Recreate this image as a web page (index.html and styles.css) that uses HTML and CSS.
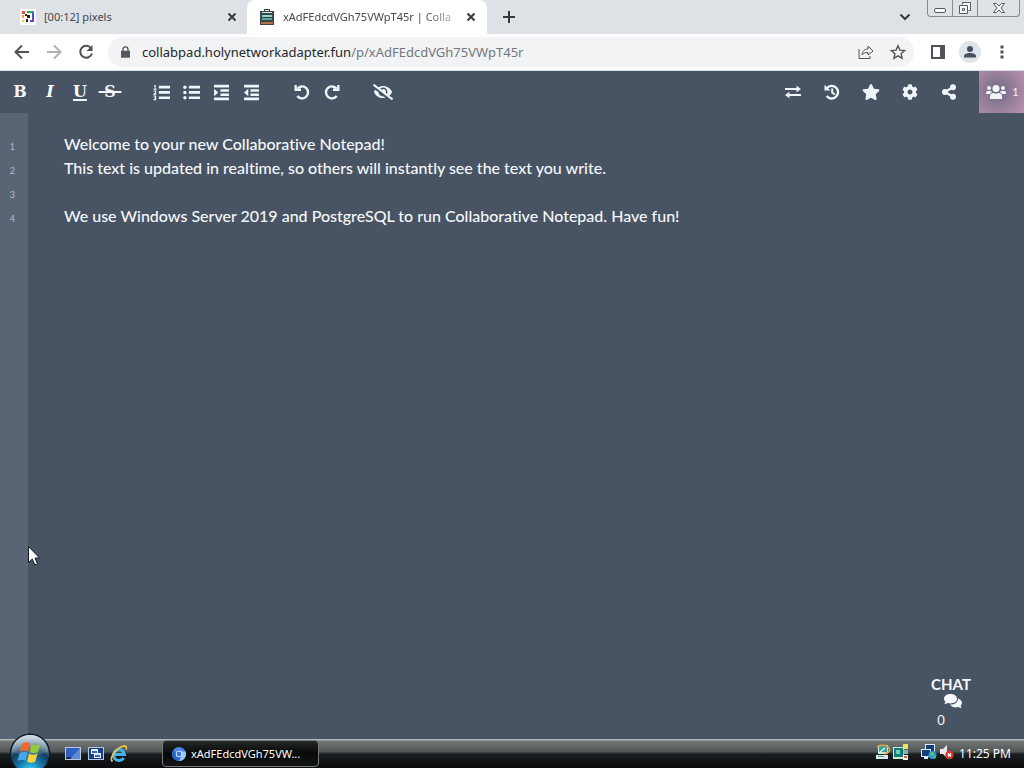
FILE: index.html
```
<!DOCTYPE html>
<html lang="en">
<head>
<meta charset="utf-8">
<title>xAdFEdcdVGh75VWpT45r | Collaborative Notepad</title>
<link rel="stylesheet" href="styles.css">
</head>
<body>
<header class="tabstrip">
  <div class="tab">
    <svg class="favicon" viewBox="0 0 16 16" width="16" height="16"><path fill="#fff" d="M0 0h16v16H0z"/><path fill="#e94b3c" d="M2 2h3v3H2z"/><path fill="#f5a623" d="M2 6h2v3H2z"/><path fill="#222" d="M5 5h2v2H5zM6 10h2v3H6zM7 6h3v3H7z"/><path fill="#f5d423" d="M2 11h2v2H2z"/><path fill="#2f9e55" d="M7 2h4v2H7z"/><path fill="#3a8bd0" d="M11 2h3v2h-3z"/><path fill="#3a53d0" d="M12 4h2v5h-2z"/><path fill="#7a3bc4" d="M12 9h2v4h-4v-2h2z"/></svg>
    <a class="tab-title" href="#pixels">[00:12] pixels</a>
    <button class="tab-close" aria-label="Close pixels tab"><svg viewBox="0 0 10 10" width="10" height="10"><path d="M1.500 1.500l7 7m0-7l-7 7"/></svg></button>
  </div>
  <div class="tab tab-active">
    <svg class="favicon" viewBox="0 0 16 16" width="16" height="16"><path fill="#37474c" d="M1 2h4V0h6v2h4v14H1z"/><path fill="#d8e4e4" d="M6 1h4v1H6zM3 3h10v1H3z"/><path fill="#8fd4c6" d="M3 6h10v2H3z"/><path fill="#5aa497" d="M3 9h10v2H3z"/><path fill="#b5714f" d="M2 13h12v2H2z"/></svg>
    <a class="tab-title" href="#pad">xAdFEdcdVGh75VWpT45r | Colla</a>
    <button class="tab-close" aria-label="Close notepad tab"><svg viewBox="0 0 10 10" width="10" height="10"><path d="M1.500 1.500l7 7m0-7l-7 7"/></svg></button>
  </div>
  <button class="new-tab" aria-label="New tab"><svg viewBox="0 0 14 14" width="14" height="14"><path d="M7 1v12M1 7h12"/></svg></button>
  <button class="tab-search" aria-label="Search tabs"><svg viewBox="0 0 12 8" width="12" height="8"><path d="M1.500 1.500L6 6l4.500-4.500"/></svg></button>
  <div class="window-controls">
    <button aria-label="Minimize"><svg viewBox="0 0 14 14" width="14" height="14"><rect x="1.500" y="7.500" width="11" height="4" rx="1.500"/></svg></button>
    <button aria-label="Restore"><svg viewBox="0 0 14 14" width="14" height="14"><path d="M4.500 3.500v-2h8v8h-2M1.500 4.500h8v8h-8zM4.500 7.500h2v2h-2z"/></svg></button>
    <button class="wide" aria-label="Close window"><svg viewBox="0 0 14 14" width="14" height="14"><path d="M1.500 2.500h3L7 5l2.500-2.500h3L9 7l3.500 4.500h-3L7 9l-2.500 2.500h-3L5 7z"/></svg></button>
  </div>
</header>

<nav class="navbar">
  <button class="nav-btn" aria-label="Back"><svg viewBox="0 0 16 16" width="16" height="16"><path d="M15 8H2m6-6.500L1.500 8 8 14.500"/></svg></button>
  <button class="nav-btn muted" aria-label="Forward"><svg viewBox="0 0 16 16" width="16" height="16"><path d="M1 8h13M8 1.500L14.500 8 8 14.500"/></svg></button>
  <button class="nav-btn" aria-label="Reload"><svg viewBox="0 0 16 16" width="16" height="16"><path d="M13 4a6 6 0 1 0 1 5.500"/><path class="solid" d="M14.500 1v6h-6z"/></svg></button>
  <div class="omnibox">
    <svg class="lock" viewBox="0 0 10 13" width="9" height="12"><path fill="#55585c" d="M0 5h1.500V3.500a3.500 3.500 0 0 1 7 0V5H10v8H0zM3 5h4V3.500a2 2 0 0 0-4 0z"/></svg>
    <div class="url" role="textbox" contenteditable="true" spellcheck="false" aria-label="Address">collabpad.holynetworkadapter.fun<span>/p/xAdFEdcdVGh75VWpT45r</span></div>
    <button aria-label="Share page"><svg viewBox="0 0 16 16" width="16" height="16"><path class="thin" d="M1 5v9.500h11V12M4 11c.5-4 2.500-6 6-6V2l5 5-5 4V8.500c-3 0-4.500.5-6 2.500z"/></svg></button>
    <button aria-label="Bookmark"><svg viewBox="0 0 16 16" width="16" height="16"><path class="star" d="M8 1.800l1.900 4.300 4.700.5-3.500 3.100 1 4.600L8 11.900l-4.100 2.400 1-4.600-3.500-3.100 4.700-.5z"/></svg></button>
  </div>
  <button class="nav-btn side" aria-label="Side panel"><svg viewBox="0 0 16 16" width="16" height="16"><path class="solid" d="M1 1h14v14H1zM3 3v10h7V3z" fill-rule="evenodd"/></svg></button>
  <button class="nav-btn" aria-label="Profile"><svg viewBox="0 0 22 22" width="22" height="22"><circle cx="11" cy="11" r="11" fill="#dfe4e9" stroke="none"/><circle cx="11" cy="8" r="3" fill="#46515f" stroke="none"/><path fill="#46515f" stroke="none" d="M5 16.500v-1.500c0-4 12-4 12 0v1.500z"/></svg></button>
  <button class="nav-btn" aria-label="Menu"><svg viewBox="0 0 4 16" width="4" height="16"><path class="solid" d="M.5 1.500h3v3h-3zM.5 6.500h3v3h-3zM.5 11.500h3v3h-3z"/></svg></button>
</nav>

<main class="pad">
  <div class="toolbar">
    <div class="group">
      <button aria-label="Bold" class="letter">B</button>
      <button aria-label="Italic" class="letter italic">I</button>
      <button aria-label="Underline" class="letter underline">U</button>
      <button aria-label="Strikethrough" class="letter strike"><s>&nbsp;S&nbsp;</s></button>
    </div>
    <div class="group">
      <button aria-label="Ordered list"><svg viewBox="0 0 16 16" width="17" height="17"><path d="M5.500 1.700H16v2.500H5.500zM5.500 6.700H16v2.500H5.500zM5.500 11.700H16v2.500H5.500z"/><path class="line" d="M1 1.500h1V5M.5 5h3M.5 6.500h2v1.700L.8 9.700h2.400M.5 11.300h2v3.400h-2M1 13h1.500"/></svg></button>
      <button aria-label="Unordered list"><svg viewBox="0 0 16 16" width="17" height="17"><path d="M5.500 1.700H16v2.500H5.500zM5.500 6.700H16v2.500H5.500zM5.500 11.700H16v2.500H5.500z"/><circle cx="1.800" cy="3" r="1.600"/><circle cx="1.800" cy="8" r="1.600"/><circle cx="1.800" cy="13" r="1.600"/></svg></button>
      <button aria-label="Indent"><svg viewBox="0 0 16 16" width="17" height="17"><path d="M1 .8h14v2.400H1zM7 4.900h8v2.300H7zM7 8.900h8v2.300H7zM1 12.800h14v2.400H1zM1 4.500L5 8l-4 3.500z"/></svg></button>
      <button aria-label="Outdent"><svg viewBox="0 0 16 16" width="17" height="17"><path d="M1 .8h14v2.400H1zM7 4.900h8v2.300H7zM7 8.900h8v2.300H7zM1 12.800h14v2.400H1zM5 4.500v7L1 8z"/></svg></button>
    </div>
    <div class="group">
      <button aria-label="Undo"><svg viewBox="0 0 16 16" width="16" height="16"><path class="arc" d="M3.500 4.500a6 6 0 1 1-.2 7.600"/><path d="M.5 1h2.300v3.500h4.200V7H.5z"/></svg></button>
      <button aria-label="Redo"><svg viewBox="0 0 16 16" width="16" height="16"><path class="arc" d="M12.500 4.500a6 6 0 1 0 .2 7.600"/><path d="M15.500 1h-2.300v3.500H9V7h6.500z"/></svg></button>
    </div>
    <div class="group">
      <button aria-label="Clear authorship colors"><svg viewBox="0 0 640 512" width="20" height="16"><path d="M320 400c-75.900 0-137.300-58.700-142.900-133.100L72.200 185.800c-13.800 17.300-26.500 35.600-36.700 55.600a32.400 32.400 0 0 0 0 29.200C89.700 376.400 197.100 448 320 448c26.900 0 52.900-4 77.900-10.500L346 397.400a144 144 0 0 1-26 2.600zm313.800 58.100l-110.500-85.400a331.300 331.300 0 0 0 81.200-102.100 32.400 32.400 0 0 0 0-29.200C550.300 135.600 442.900 64 320 64a308.200 308.200 0 0 0-147.300 37.700L45.500 3.400A16 16 0 0 0 23 6.200L3.400 31.500A16 16 0 0 0 6.200 53.900l588.400 454.700a16 16 0 0 0 22.400-2.800l19.600-25.300a16 16 0 0 0-2.800-22.400zM450.200 314.500l-39.300-30.400A94.800 94.800 0 0 0 416 256a94.800 94.800 0 0 0-121.300-92.200A47.700 47.700 0 0 1 304 192a46.600 46.600 0 0 1-1.500 10l-73.600-56.900A142.300 142.300 0 0 1 320 112a143.900 143.900 0 0 1 144 144c0 21.600-5.300 41.800-13.800 58.500z"/></svg></button>
    </div>
    <div class="group group-right">
      <button aria-label="Import and export"><svg viewBox="0 0 16 16" width="16" height="16"><path d="M0 4h11.500V1.800L16 5l-4.500 3.200V6H0zM16 10H4.500V7.800L0 11l4.500 3.200V12H16z"/></svg></button>
      <button aria-label="History"><svg viewBox="0 0 16 16" width="16" height="16"><path class="arc" d="M3 4a6.300 6.300 0 1 1-.3 8"/><path d="M.5.8L6.500 6.500H.5z"/><path class="hand" d="M8.200 4.500v4l2.500 2"/></svg></button>
      <button aria-label="Save revision"><svg viewBox="0 0 576 512" width="18" height="16"><path d="M259.300 17.800L194 150.200 47.900 171.500c-26.200 3.800-36.700 36.100-17.700 54.600l105.700 103-25 145.500c-4.500 26.300 23.200 46 46.400 33.700L288 439.600l130.700 68.700c23.200 12.200 50.900-7.400 46.400-33.700l-25-145.500 105.700-103c19-18.500 8.500-50.800-17.700-54.600L382 150.200 316.700 17.800c-11.700-23.600-45.600-23.900-57.400 0z"/></svg></button>
      <button aria-label="Settings"><svg viewBox="0 0 512 512" width="16" height="16"><path d="M487.400 315.700l-42.600-24.600c4.300-23.200 4.300-47 0-70.200l42.600-24.600c4.900-2.800 7.100-8.600 5.500-14-11.100-35.600-30-67.800-54.700-94.600-3.800-4.100-10-5.100-14.800-2.300L380.800 110c-17.900-15.400-38.500-27.300-60.800-35.100V25.800c0-5.600-3.900-10.500-9.400-11.700-36.700-8.200-74.300-7.800-109.200 0-5.500 1.200-9.400 6.100-9.400 11.700V75c-22.200 7.900-42.800 19.800-60.800 35.100L88.700 85.500c-4.900-2.800-11-1.900-14.800 2.300-24.700 26.700-43.600 58.900-54.700 94.600-1.700 5.400.6 11.200 5.500 14L67.300 221c-4.300 23.200-4.300 47 0 70.200l-42.600 24.600c-4.900 2.800-7.100 8.600-5.500 14 11.100 35.600 30 67.800 54.700 94.600 3.800 4.100 10 5.100 14.800 2.300l42.600-24.600c17.900 15.400 38.500 27.300 60.800 35.100v49.200c0 5.600 3.900 10.500 9.400 11.700 36.700 8.200 74.300 7.800 109.200 0 5.500-1.200 9.400-6.100 9.400-11.700v-49.200c22.200-7.900 42.800-19.800 60.800-35.100l42.600 24.600c4.900 2.800 11 1.900 14.800-2.300 24.700-26.700 43.600-58.900 54.700-94.600 1.500-5.500-.7-11.300-5.600-14.100zM256 336c-44.100 0-80-35.900-80-80s35.900-80 80-80 80 35.900 80 80-35.900 80-80 80z"/></svg></button>
      <button aria-label="Share pad"><svg viewBox="0 0 16 16" width="16" height="16"><circle cx="12" cy="3.200" r="3"/><circle cx="4" cy="8" r="3"/><circle cx="12" cy="12.800" r="3"/><path class="arc" d="M12 3.200L4 8l8 4.800"/></svg></button>
    </div>
    <button class="users" aria-label="Connected users"><svg viewBox="0 0 20 16" width="20" height="16"><circle cx="3" cy="4" r="2"/><circle cx="17" cy="4" r="2"/><circle cx="10" cy="4.500" r="3.500"/><path d="M0 10V9c0-1.500 1-2 2-2h2c1 0 1.500.4 2 1-1 .6-1.500 1-1.800 2zM20 10V9c0-1.500-1-2-2-2h-2c-1 0-1.500.4-2 1 1 .6 1.500 1 1.800 2zM4 15v-2.500C4 10 5.500 9 7.500 9c1.500.7 3.500.7 5 0 2 0 3.500 1 3.500 3.500V15z"/></svg><span>1</span></button>
  </div>

  <div class="editor">
    <ol class="gutter"><li>1</li><li>2</li><li>3</li><li>4</li></ol>
    <textarea class="text" aria-label="Pad text" spellcheck="false">Welcome to your new Collaborative Notepad!
This text is updated in realtime, so others will instantly see the text you write.

We use Windows Server 2019 and PostgreSQL to run Collaborative Notepad. Have fun!</textarea>
    <button class="chat"><span class="chat-label">CHAT</span>
      <svg viewBox="0 0 18 14" width="18" height="14"><path d="M6.500 0C10 0 13 2 13 4.800s-3 4.700-6.500 4.700c-1 0-2-.2-2.800-.5C2.700 9.700 1.500 10 .2 10c.6-.7 1-1.500 1.200-2.300C.5 6.900 0 5.900 0 4.800 0 2 3 0 6.500 0z"/><path d="M14 4.400c2.300.7 4 2.300 4 4.400 0 1.100-.5 2.100-1.400 2.900.2.800.6 1.600 1.200 2.300-1.300 0-2.500-.4-3.500-1-3.200 1-6.800 0-8.300-2.500 4.500.2 8-2.300 8-6.100z"/></svg>
      <span class="chat-count">0</span></button>
  </div>
  <svg class="cursor" viewBox="0 0 12 20" width="12" height="20"><path d="M.5.500v16L4.300 13l2.600 6 2.600-1.100L7 12h4.500z"/></svg>
</main>

<footer class="taskbar">
  <button class="start" aria-label="Start"><svg viewBox="0 0 42 42" width="42" height="42">
    <defs><radialGradient id="orb" cx=".5" cy=".95" r=".9"><stop offset="0" stop-color="#3fe0ff"/><stop offset=".35" stop-color="#1878ae"/><stop offset=".65" stop-color="#123c5c"/><stop offset="1" stop-color="#a9bac8"/></radialGradient><linearGradient id="gloss" x2="0" y2="1"><stop offset="0" stop-color="#dce5ec" stop-opacity=".85"/><stop offset="1" stop-color="#8ca6b8" stop-opacity=".25"/></linearGradient></defs>
    <circle cx="21" cy="21" r="20.500" fill="#101a22"/><circle cx="21" cy="21" r="19" fill="url(#orb)"/><path fill="url(#gloss)" d="M3 19a18 17 0 0 1 36 0q-18 7-36 0z"/>
    <path fill="#ee6a2c" d="M13 11q4-3 8-.5l-2 8q-4-2-8 .5z"/><path fill="#94c83d" d="M22.500 11q4 2.500 9 0l-2.500 8q-4 2.500-8.500 0z"/><path fill="#45a8e8" d="M10.600 20.500q4-2.500 8-.5l-2 8q-4-2.500-8 0z"/><path fill="#fbd13b" d="M20 20.500q4 2.500 8.600 0l-2.300 8q-4 2.500-8.300 0z"/></svg></button>
  <button class="quick" aria-label="Show desktop"><svg viewBox="0 0 16 14" width="16" height="14"><path fill="#b9c6dc" d="M0 0h16v13H0z"/><path fill="#315fc1" d="M1 1h14v11H1z"/><path fill="#7da7ea" d="M15 1v11L5 12z" opacity=".6"/><path fill="#1b2b4c" d="M1 10h5v2H1z"/></svg></button>
  <button class="quick" aria-label="Switch windows"><svg viewBox="0 0 16 14" width="16" height="14"><path fill="#b9c6dc" d="M0 0h16v13H0z"/><path fill="#173f87" d="M1 1h14v11H1z"/><path fill="#e6effb" d="M3 2h7v5H3zM6 6h7v5H6z"/><path fill="#356ac0" d="M4 4h5v2H4zM7 8h5v2H7z"/></svg></button>
  <button class="quick" aria-label="Internet Explorer"><svg viewBox="0 0 18 18" width="18" height="18"><path fill="none" stroke="#42b3f0" stroke-width="3" d="M4 9.500h10.500A5.500 5.500 0 1 0 13.700 13"/><path fill="none" stroke="#f5c83b" stroke-width="1.600" d="M2.500 16.500C-1 14 5 4 12 1.500c4-1.500 5 0 4 3"/></svg></button>
  <button class="task"><svg viewBox="0 0 14 14" width="14" height="14"><circle cx="7" cy="7" r="7" fill="#4b86e6"/><path fill="#9fc5ff" d="M7 14a7 7 0 0 0 6.500-9.500H7z"/><path fill="#2866cc" d="M1 3.500A7 7 0 0 0 7 14l2.500-5z"/><circle cx="7" cy="7" r="3.200" fill="#e8f1ff"/><circle cx="7" cy="7" r="2.400" fill="#3476dc"/></svg><span>xAdFEdcdVGh75VW...</span></button>
  <div class="tray">
    <svg viewBox="0 0 16 16" width="16" height="16"><path fill="#c9e8e4" d="M3 1h10v9H3z"/><path fill="#3a9e9a" d="M4 2h8v6H4z"/><path fill="#dcebea" d="M1 11h12v4H1z"/><path fill="#4a9c92" d="M3 12h6v1H3z"/><path fill="none" stroke="#d9a648" stroke-width="1.500" d="M2 3c3-3 10-2 12 1s-2 6-5 6"/><path fill="none" stroke="#e8f6f4" stroke-width="1.200" d="M5 8l5-4"/></svg>
    <svg viewBox="0 0 16 16" width="16" height="16"><path fill="#c7ecdc" d="M0 3h11v12H0z"/><path fill="#137c74" d="M1 4h9v9H1z"/><path fill="#67d5bb" d="M3 6h4v4H3z"/><path fill="#f0e458" d="M10 0h5v5h-5z"/><path fill="#7fb8a8" d="M10 6h5v4h-5z"/><path fill="#eef4f2" d="M10 11h5v5h-5z"/><path fill="#d85a4b" d="M11 12h3v2h-3z"/></svg>
    <svg class="network" viewBox="0 0 16 16" width="16" height="16"><path fill="#d9ecff" d="M4 0h10v9H4zM0 5h10v8H0zM3 13h4v2H3z"/><path fill="#123f78" d="M5 1h8v7H5z"/><path fill="#d9ecff" d="M0 5h10v8H0z"/><path fill="#123f78" d="M1 6h8v6H1z"/><circle cx="11.500" cy="11" r="4" fill="#2790db"/><path fill="#62cd62" d="M9 9l3-1 1 3-3 1zM12 13l3-2-1 4z"/></svg>
    <svg viewBox="0 0 16 16" width="16" height="16"><path fill="#e8e8e8" d="M1 5h3l4-4v13l-4-4H1z"/><circle cx="10.500" cy="11" r="4.200" fill="#d8322d"/><path stroke="#fff" stroke-width="1.500" d="M9 9.500l3 3m0-3l-3 3"/></svg>
    <time>11:25 PM</time>
  </div>
</footer>
</body>
</html>
```
FILE: styles.css
```
* { box-sizing: border-box; }
body {
  margin: 0;
  height: 100vh;
  display: flex;
  flex-direction: column;
  overflow: hidden;
  background: #485363;
  font: 12px/16px "Noto Sans", "Open Sans", sans-serif;
}
button { border: 0; padding: 0; background: none; color: inherit; font: inherit; display: flex; align-items: center; justify-content: center; flex: none; }
svg { flex: none; display: block; }
a { color: inherit; text-decoration: none; }

/* Browser tabs */
.tabstrip { display: flex; height: 34px; flex: none; background: #dee1e6; color: #45484c; }
.tab { display: flex; align-items: center; width: 247px; padding: 0 9px 0 20px; gap: 8px; }
.tab-active { width: 240px; padding: 0 10px 0 12px; background: #fff; border-radius: 8px 8px 0 0; }
.tab-title { flex: 1; min-width: 0; white-space: nowrap; font-size: 11px; }
.tab-active .tab-title { mask-image: linear-gradient(90deg, #000 80%, rgb(0 0 0 / 30%) 100%); }
.tab-close { width: 12px; height: 16px; }
.tabstrip button svg { fill: none; stroke: #36393d; stroke-width: 2; }
.new-tab { width: 44px; }
.tab-search { width: 28px; margin-left: auto; }
.window-controls { display: flex; height: 17px; margin: 0 4px 0 8px; border: 1px solid #878b91; border-top: 0; border-radius: 0 0 4px 4px; }
.window-controls button { width: 25px; border-right: 1px solid #878b91; }
.window-controls .wide { width: 41px; border-right: 0; }
.tabstrip .window-controls svg { stroke: #565b62; stroke-width: 1; fill: #fafafa; }

/* Address bar */
.navbar { display: flex; align-items: center; height: 37px; flex: none; padding: 0 6px; background: #fff; border-bottom: 1px solid #d7dde2; }
.nav-btn { width: 32px; height: 32px; }
.side { margin-left: 8px; }
.navbar svg { fill: none; stroke: #505357; stroke-width: 2; }
.navbar .solid { fill: #505357; stroke: none; }
.navbar .thin { stroke-width: 1; }
.navbar .star { stroke-width: 1.4; }
.muted { opacity: .45; }
.navbar .lock { stroke: none; }
.omnibox { flex: 1; min-width: 0; display: flex; align-items: center; height: 30px; margin-left: 6px; padding: 0 0 0 13px; border-radius: 15px; background: #f1f3f4; }
.omnibox button { width: 32px; height: 30px; }
.url { flex: 1; min-width: 0; padding-left: 12px; overflow: hidden; white-space: nowrap; outline: 0; font-size: 13px; line-height: 20px; color: #25282c; }
.url span { color: #73777c; }

/* Notepad */
.pad { flex: 1; min-height: 0; display: flex; flex-direction: column; position: relative; color: #f5f8fc; font-family: Lato, sans-serif; font-variant-ligatures: none; }
.toolbar { display: flex; height: 42px; flex: none; padding-left: 5px; }
.toolbar svg { fill: #f0f5fa; }
.group { display: flex; margin-right: 21px; }
.group button { width: 30px; }
.group-right { margin: 0 11px 0 auto; }
.group-right button { width: 39px; }
.toolbar .line { fill: none; stroke: #f0f5fa; stroke-width: 1; }
.toolbar .arc, .toolbar .hand { fill: none; stroke: #f0f5fa; stroke-width: 2; }
.toolbar .arc { stroke-width: 2.4; }
.toolbar .letter { font: bold 16px/20px "DejaVu Serif", serif; }
.toolbar .italic { font-style: italic; }
.underline { text-decoration: underline 2px; text-underline-offset: 2px; }
.strike s { text-decoration: line-through 2px; white-space: pre; }
.users { width: 45px; gap: 6px; padding-left: 2px; background: radial-gradient(circle at 42% 48%, #756d86 12%, #927d99 45%, #bd91b2 100%); font-size: 11px; }
.editor { flex: 1; display: flex; min-height: 0; position: relative; }
.gutter { width: 28px; margin: 0; padding: 22px 13px 0 0; list-style: none; background: #596474; color: #b4bcc8; font: 9px/24px Lato, sans-serif; text-align: right; }
.text { flex: 1; min-width: 0; padding: 19px 36px; border: 0; outline: 0; resize: none; background: none; color: #f5f8fc; font: 500 16px/24px Lato, sans-serif; font-variant-ligatures: none; }
.chat { position: absolute; right: 44px; bottom: 11px; width: 58px; flex-direction: column; }
.chat svg { fill: #f5f8fc; margin-left: 4px; }
.chat-label { font: bold 15px/20px Lato, sans-serif; }
.chat-count { margin: 4px 20px 0 0; font-size: 13px; line-height: 16px; }
.cursor { position: absolute; left: 28px; top: 475px; fill: #fff; stroke: #151a22; stroke-width: 1; }

/* Desktop taskbar */
.taskbar { position: relative; flex: none; display: flex; align-items: center; height: 29px; padding-left: 61px; color: #fff; background: linear-gradient(#b1b5b7 0 1px, #737777 2px, #515555 44%, #1b1e20 52%, #090b0d); }
.start { position: absolute; left: 9px; top: -6px; height: 35px; align-items: flex-start; overflow: hidden; }
.quick { width: 23px; height: 28px; }
.task { height: 27px; width: 157px; gap: 5px; margin: 0 0 0 32px; padding: 0 9px; justify-content: flex-start; border: 1px solid #777b7d; border-radius: 4px; background: linear-gradient(#252828, #080909 50%, #111414); white-space: nowrap; font-size: 11px; }
.tray { margin-left: auto; display: flex; align-items: center; gap: 2px; padding-right: 13px; }
.tray svg { margin-bottom: 4px; }
.network { margin-left: 10px; }
.tray time { margin-left: 2px; }
```
